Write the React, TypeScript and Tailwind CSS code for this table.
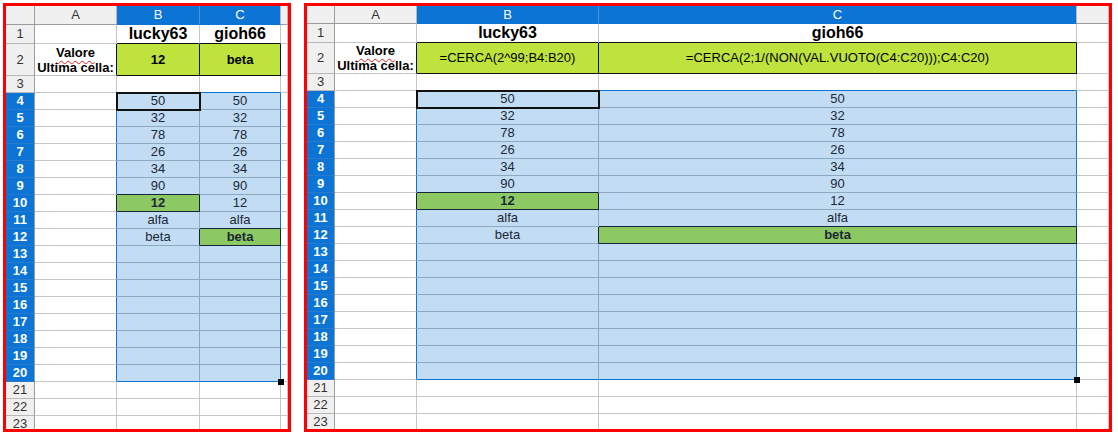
import React from "react";

const BR: Record<string, string> = {
  grid: "border-r-[#c6c6c6]",
  sel: "border-r-[#8fa8c2]",
  blue: "border-r-[#0b74d4]",
  black: "border-r-[#111111]",
  navy: "border-r-[#16263a]",
  hdr: "border-r-[#b8b8b8]",
  hdrDark: "border-r-[#9c9c9c]",
  hblue: "border-r-[#4a94e2]",
};
const BB: Record<string, string> = {
  grid: "border-b-[#c6c6c6]",
  sel: "border-b-[#8fa8c2]",
  blue: "border-b-[#0b74d4]",
  black: "border-b-[#111111]",
  navy: "border-b-[#16263a]",
  hdr: "border-b-[#b8b8b8]",
  hdrDark: "border-b-[#9c9c9c]",
  rowsel: "border-b-[#2a7acb]",
};

const isSel = (r: number, c: number) => r >= 4 && r <= 20 && (c === 2 || c === 3);
const boxed = (r: number, c: number) =>
  (r === 2 && (c === 2 || c === 3)) || (r === 10 && c === 2) || (r === 12 && c === 3);

function Spell({ children }: { children: React.ReactNode }) {
  return (
    <span className="underline decoration-wavy decoration-[#e02020] decoration-1 underline-offset-[3px]">
      {children}
    </span>
  );
}

type PanelProps = {
  widthClass: string;
  colsClass: string;
  rowsClass: string;
  b2: string;
  c2: string;
};

function Panel({ widthClass, colsClass, rowsClass, b2, c2 }: PanelProps) {
  const cells: React.ReactNode[] = [];
  const letters = ["", "A", "B", "C", ""];
  for (let r = 0; r <= 23; r++) {
    for (let c = 0; c <= 4; c++) {
      let br = "grid";
      let bb = "grid";
      let bg = "bg-white";
      let text = "text-[13px] text-black";
      let content: React.ReactNode = null;
      let extra = "";
      let handle = false;

      if (r === 0) {
        bg = "bg-[#f0f0f0]";
        bb = "hdrDark";
        br = c === 0 ? "hdrDark" : "hdr";
        text = "text-[13px] text-[#333333]";
        content = letters[c];
        if (c === 2 || c === 3) {
          bg = "bg-[#0b74d4]";
          bb = "blue";
          br = c === 2 ? "hblue" : "hdr";
          text = "text-[13px] text-white";
        }
      } else if (c === 0) {
        br = "hdrDark";
        content = String(r);
        if (r >= 4 && r <= 20) {
          bg = "bg-[#0b74d4]";
          bb = "rowsel";
          text = "text-[13px] font-bold text-white";
        } else {
          bg = "bg-[#f0f0f0]";
          bb = "hdr";
          text = "text-[13px] text-[#333333]";
        }
      } else {
        // right border
        if (boxed(r, c) || boxed(r, c + 1)) br = r === 2 ? "black" : "navy";
        else if (r >= 4 && r <= 20 && (c === 1 || c === 3)) br = "blue";
        else if (isSel(r, c)) br = "sel";
        // bottom border
        if (boxed(r, c) || boxed(r + 1, c)) bb = r === 2 || r + 1 === 2 ? "black" : "navy";
        else if ((r === 3 || r === 20) && (c === 2 || c === 3)) bb = "blue";
        else if (isSel(r, c)) bb = "sel";

        if (isSel(r, c)) {
          bg = "bg-[#c1dcf3]";
          text = "text-[13px] text-[#1c2836]";
        }
        if (r === 1 && c === 2) {
          content = "lucky63";
          text = "text-[16px] font-bold text-black";
        }
        if (r === 1 && c === 3) {
          content = "gioh66";
          text = "text-[16px] font-bold text-black";
        }
        if (r === 2 && c === 1) {
          text = "text-[13px] font-bold text-black leading-[15px] text-center";
          content = (
            <div className="flex flex-col items-center">
              <span>
                <Spell>Valore</Spell>
              </span>
              <span>
                <Spell>Ultima</Spell> <Spell>cella</Spell>:
              </span>
            </div>
          );
        }
        if (r === 2 && c === 2) {
          bg = "bg-[#bee33d]";
          content = b2;
          text = b2.startsWith("=") ? "text-[13px] text-black" : "text-[13px] font-bold text-black";
        }
        if (r === 2 && c === 3) {
          bg = "bg-[#bee33d]";
          content = c2;
          text = c2.startsWith("=") ? "text-[13px] text-black" : "text-[13px] font-bold text-black";
        }
        if (isSel(r, c)) {
          const vals = ["50", "32", "78", "26", "34", "90", "12", "alfa", "beta"];
          if (r <= 12) content = vals[r - 4];
        }
        if (r === 10 && c === 2) {
          bg = "bg-[#8dc963]";
          text = "text-[13px] font-bold text-[#1c2836]";
        }
        if (r === 12 && c === 3) {
          bg = "bg-[#8dc963]";
          text = "text-[13px] font-bold text-[#1c2836]";
        }
        if (r === 4 && c === 2) {
          extra = "outline-2 outline-offset-[-1px] outline-[#111111] z-10";
        }
        if (r === 20 && c === 3) handle = true;
      }

      cells.push(
        <div
          key={`${r}-${c}`}
          className={`relative flex items-center justify-center whitespace-nowrap border-r border-b ${BR[br]} ${BB[bb]} ${bg} ${text} ${extra}`}
        >
          {content}
          {handle && (
            <div className="absolute right-[-4px] bottom-[-4px] z-20 h-[6px] w-[6px] bg-black" />
          )}
        </div>
      );
    }
  }
  return (
    <div className={`h-[429px] ${widthClass} overflow-hidden border-[3px] border-[#ff0000] bg-white`}>
      <div className={`grid ${colsClass} ${rowsClass}`}>{cells}</div>
    </div>
  );
}

export default function App() {
  return (
    <div className="flex h-[437px] w-[1118px] gap-[13px] bg-white pl-[3px] pt-[3px] font-['Liberation_Sans',Arial,sans-serif]">
      <Panel
        widthClass="w-[288px]"
        colsClass="grid-cols-[29px_82px_83px_81px_1fr]"
        rowsClass="grid-rows-[19px_19px_32px_17px_repeat(20,17px)]"
        b2="12"
        c2="beta"
      />
      <Panel
        widthClass="w-[808px]"
        colsClass="grid-cols-[28px_82px_182px_478px_1fr]"
        rowsClass="grid-rows-[18px_19px_31px_17px_repeat(20,17px)]"
        b2="=CERCA(2^99;B4:B20)"
        c2="=CERCA(2;1/(NON(VAL.VUOTO(C4:C20)));C4:C20)"
      />
    </div>
  );
}
